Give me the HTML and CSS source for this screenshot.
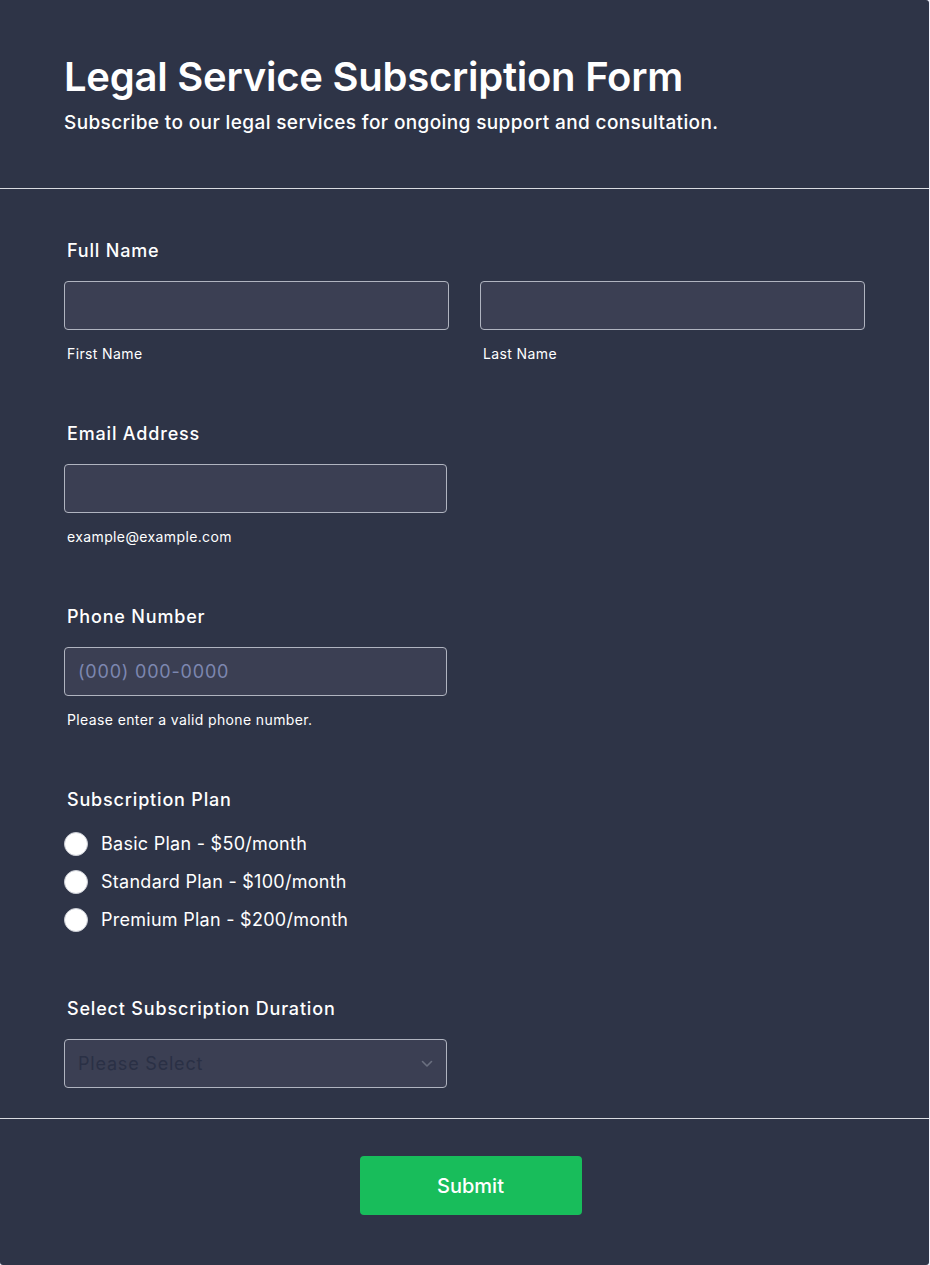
FILE: index.html
```html
<!DOCTYPE html>
<html>
<head>
<meta charset="utf-8">
<link rel="stylesheet" href="styles.css">
</head>
<body>
<form class="form">
  <header class="form-header">
    <h1 class="title">Legal Service Subscription Form</h1>
    <p class="subtitle">Subscribe to our legal services for ongoing support and consultation.</p>
  </header>
  <div class="form-body">
    <div class="field">
      <label class="label">Full Name</label>
      <div class="row">
        <div class="col">
          <input class="input" type="text">
          <span class="sublabel">First Name</span>
        </div>
        <div class="col">
          <input class="input" type="text">
          <span class="sublabel">Last Name</span>
        </div>
      </div>
    </div>
    <div class="field">
      <label class="label">Email Address</label>
      <div class="col half">
        <input class="input" type="text">
        <span class="sublabel">example@example.com</span>
      </div>
    </div>
    <div class="field">
      <label class="label">Phone Number</label>
      <div class="col half">
        <input class="input" type="text" placeholder="(000) 000-0000">
        <span class="sublabel">Please enter a valid phone number.</span>
      </div>
    </div>
    <div class="field field-plan">
      <label class="label">Subscription Plan</label>
      <div class="radios">
        <label class="radio"><span class="dot"></span>Basic Plan - $50/month</label>
        <label class="radio"><span class="dot"></span>Standard Plan - $100/month</label>
        <label class="radio"><span class="dot"></span>Premium Plan - $200/month</label>
      </div>
    </div>
    <div class="field">
      <label class="label">Select Subscription Duration</label>
      <div class="select half">
        <span class="select-text">Please Select</span>
        <svg class="chev" width="12" height="8" viewBox="0 0 12 8"><path d="M1.5 1.5 L6 6 L10.5 1.5" fill="none" stroke="#6b7080" stroke-width="1.6" stroke-linecap="round" stroke-linejoin="round"/></svg>
      </div>
    </div>
  </div>
  <footer class="form-footer">
    <button class="submit" type="button">Submit</button>
  </footer>
</form>
</body>
</html>
```
FILE: styles.css
```css
* { box-sizing: border-box; }
html, body { margin: 0; padding: 0; }
body {
  background: #f3f3fe;
  font-family: Inter, "Noto Sans", sans-serif;
  color: #ffffff;
}
.form {
  width: 929px;
  height: 1265px;
  background: #2e3447;
  border-radius: 0 3px 3px 3px;
  display: flex;
  flex-direction: column;
}
.form-header {
  padding: 53px 64px 0;
  height: 189px;
  border-bottom: 1px solid #d8dae0;
}
.title {
  margin: 0;
  font-size: 40px;
  font-weight: 600;
  line-height: 48px;
  letter-spacing: -0.25px;
}
.subtitle {
  margin: 10px 0 0;
  font-size: 19px;
  font-weight: 500;
  line-height: 24px;
  letter-spacing: 0.38px;
}
.form-body {
  padding: 51px 64px 0;
  height: 930px;
  border-bottom: 1px solid #d8dae0;
  display: flex;
  flex-direction: column;
}
.field {
  display: flex;
  flex-direction: column;
  margin-bottom: 60px;
}
.label {
  font-size: 18px;
  font-weight: 500;
  line-height: 22px;
  letter-spacing: 0.82px;
  padding-left: 3px;
  margin-bottom: 19px;
}
.row {
  display: flex;
  gap: 31px;
  width: 801px;
}
.col {
  display: flex;
  flex-direction: column;
  flex: 1;
}
.half { width: 383px; flex: none; }
.input {
  height: 49px;
  width: 100%;
  background: #3b3f53;
  border: 1px solid #b0b4c0;
  border-radius: 4px;
  padding: 0 13px;
  font-family: Inter, sans-serif;
  font-size: 18px;
  letter-spacing: 0.8px;
  color: #fff;
  outline: none;
}
.input::placeholder { color: #7d87b0; }
.sublabel {
  font-size: 14px;
  line-height: 18px;
  letter-spacing: 0.38px;
  margin-top: 15px;
  padding-left: 3px;
}
.radios {
  display: flex;
  flex-direction: column;
  gap: 14px;
  margin-top: 2px;
}
.radio {
  display: flex;
  align-items: center;
  gap: 13px;
  font-size: 18px;
  line-height: 24px;
  letter-spacing: 0.27px;
}
.dot {
  width: 24px;
  height: 24px;
  border-radius: 50%;
  background: #ffffff;
  border: 1px solid #c9ccd4;
}
.field-plan { margin-bottom: 66px; }
.select {
  height: 49px;
  background: #3b3f53;
  border: 1px solid #b0b4c0;
  border-radius: 4px;
  display: flex;
  align-items: center;
  justify-content: space-between;
  padding: 0 13px;
}
.select-text {
  font-size: 18px;
  letter-spacing: 0.8px;
  color: #2a3045;
}
.form-footer {
  flex: 1;
  display: flex;
  justify-content: center;
  padding-top: 37px;
  padding-left: 12px;
}
.submit {
  width: 222px;
  height: 59px;
  background: #18bd5b;
  border: none;
  border-radius: 4px;
  color: #fff;
  font-family: Inter, sans-serif;
  font-size: 20px;
  font-weight: 500;
}
```
